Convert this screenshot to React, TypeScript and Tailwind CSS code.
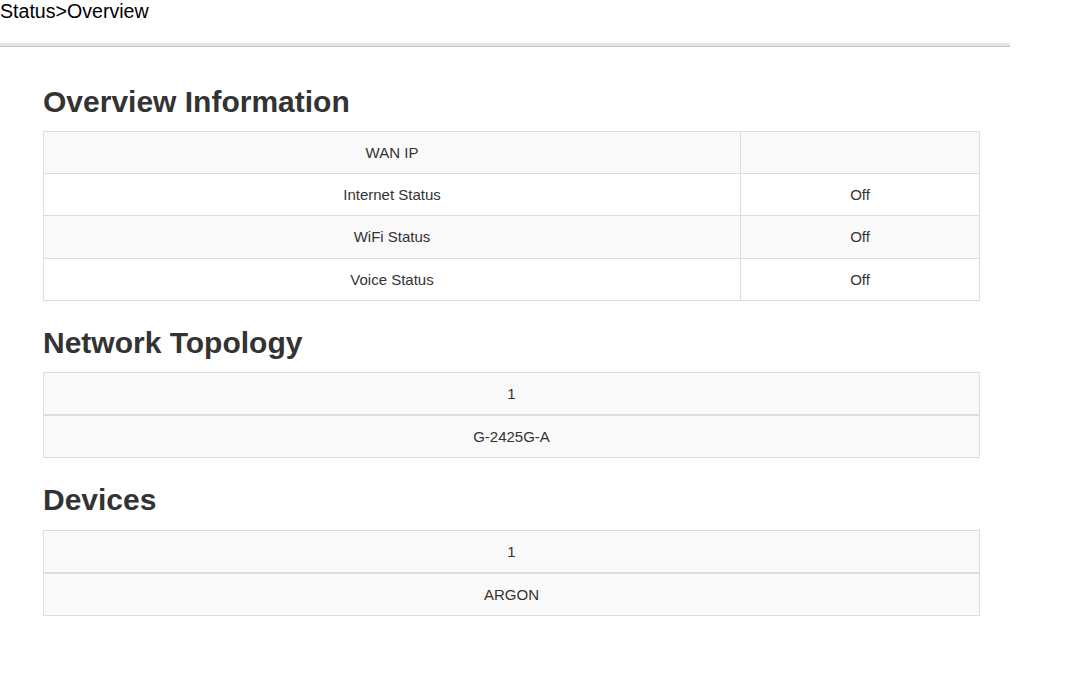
import React from "react";

const font = { fontFamily: '"Liberation Sans", Arial, sans-serif' };

function Row({
  cells,
  striped,
  thick,
  tall,
}: {
  cells: string[];
  striped?: boolean;
  thick?: boolean;
  tall?: boolean;
}) {
  return (
    <div
      className={`flex ${thick || tall ? "h-[43px]" : "h-[42px]"} ${thick ? "border-b-2" : "border-b"} border-[#dddddd] ${
        striped ? "bg-[#f9f9f9]" : "bg-white"
      }`}
    >
      {cells.map((c, i) => (
        <div
          key={i}
          className={`flex items-center justify-center pt-px text-[15px] text-[#333333] ${
            cells.length > 1 && i === 0 ? "w-[697px] border-r border-[#dddddd]" : "flex-1"
          }`}
        >
          {c}
        </div>
      ))}
    </div>
  );
}

export default function App() {
  return (
    <div className="w-[1010px] bg-white min-h-[697px]" style={font}>
      <div className="text-[19.6px] leading-[23px] text-black">Status&gt;Overview</div>
      <div className="mt-[20px] h-[3px] bg-[#e6e6e6]" />
      <div className="h-[1px] bg-[#c2c2c2]" />
      <div className="pl-[43px] w-[980px]">
        <h2 className="mt-[38px] mb-[13px] text-[30px] leading-[33px] font-bold text-[#333333]">Overview Information</h2>
        <div className="border-x border-t border-[#dddddd]">
          <Row cells={["WAN IP", ""]} striped />
          <Row cells={["Internet Status", "Off"]} />
          <Row cells={["WiFi Status", "Off"]} striped tall />
          <Row cells={["Voice Status", "Off"]} />
        </div>
        <h2 className="mt-[25px] mb-[13px] text-[30px] leading-[33px] font-bold text-[#333333]">Network Topology</h2>
        <div className="border-x border-t border-[#dddddd]">
          <Row cells={["1"]} striped thick />
          <Row cells={["G-2425G-A"]} striped />
        </div>
        <h2 className="mt-[25px] mb-[14px] text-[30px] leading-[33px] font-bold text-[#333333]">Devices</h2>
        <div className="border-x border-t border-[#dddddd]">
          <Row cells={["1"]} striped thick />
          <Row cells={["ARGON"]} striped />
        </div>
      </div>
    </div>
  );
}
